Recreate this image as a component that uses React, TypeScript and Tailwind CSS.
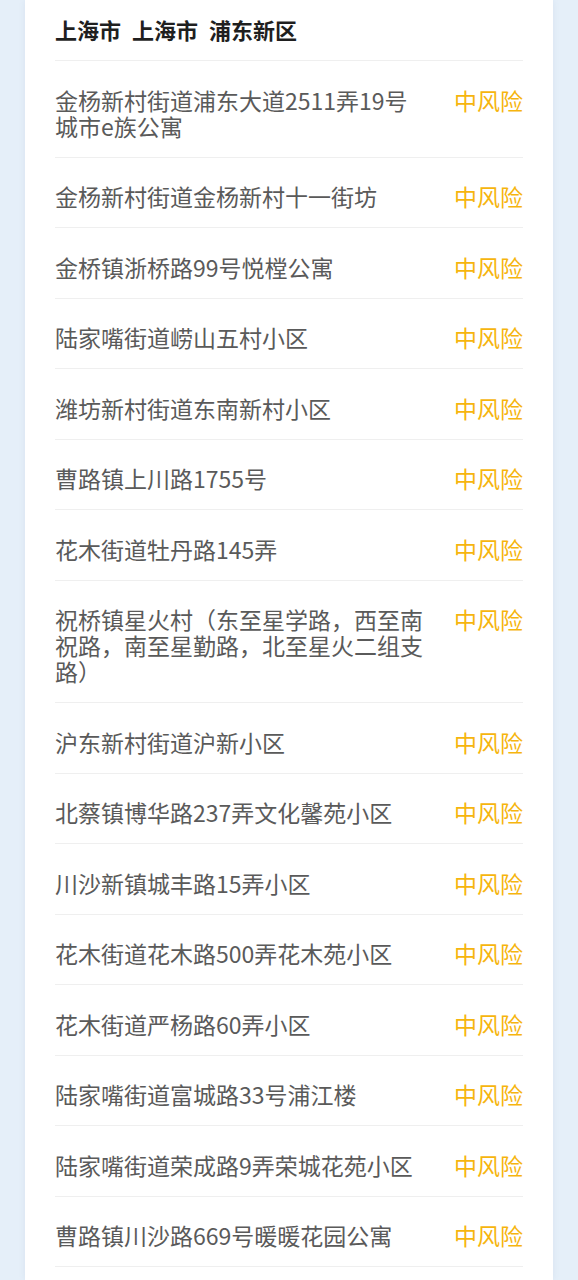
const areas = [
  '金杨新村街道浦东大道2511弄19号城市e族公寓',
  '金杨新村街道金杨新村十一街坊',
  '金桥镇浙桥路99号悦樘公寓',
  '陆家嘴街道崂山五村小区',
  '潍坊新村街道东南新村小区',
  '曹路镇上川路1755号',
  '花木街道牡丹路145弄',
  '祝桥镇星火村（东至星学路，西至南祝路，南至星勤路，北至星火二组支路）',
  '沪东新村街道沪新小区',
  '北蔡镇博华路237弄文化馨苑小区',
  '川沙新镇城丰路15弄小区',
  '花木街道花木路500弄花木苑小区',
  '花木街道严杨路60弄小区',
  '陆家嘴街道富城路33号浦江楼',
  '陆家嘴街道荣成路9弄荣城花苑小区',
  '曹路镇川沙路669号暖暖花园公寓',
]

function AreaRow({ name }: { name: string }) {
  return (
    <div className="flex items-start justify-between border-b border-[#efefef] pt-[25.5px] pb-[18px]">
      <p className="w-[371px] text-[23px] leading-[26px] text-[#5a5a5a] break-all">{name}</p>
      <span className="shrink-0 text-[23px] leading-[26px] text-[#f6b50e]">中风险</span>
    </div>
  )
}

export default function App() {
  return (
    <div
      className="min-h-screen w-[578px] bg-[#e5eff9] px-[25px] overflow-hidden"
      style={{ fontFamily: '"Noto Sans CJK SC", "Noto Sans", sans-serif' }}
    >
      <div className="h-[1280px] bg-white px-[30px] shadow-[0_0_6px_rgba(120,140,170,0.12)]">
        <div className="border-b border-[#efefef] pt-[15px] pb-[17px]">
          <h2 className="text-[22px] leading-[28px] font-bold text-[#1f1f1f] [word-spacing:6px]">
            上海市 上海市 浦东新区
          </h2>
        </div>
        {areas.map((a) => (
          <AreaRow key={a} name={a} />
        ))}
      </div>
    </div>
  )
}
